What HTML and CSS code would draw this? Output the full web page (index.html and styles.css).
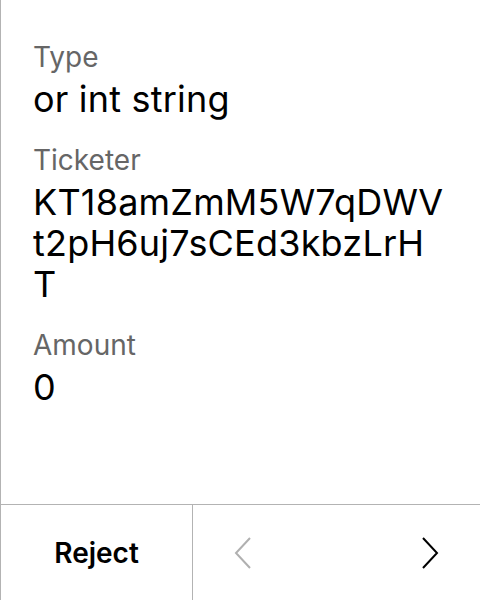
FILE: index.html
```html
<!DOCTYPE html>
<html>
<head>
<meta charset="utf-8">
<link rel="stylesheet" href="styles.css">
</head>
<body>
<div class="screen">
  <div class="content">
    <div class="field">
      <div class="label">Type</div>
      <div class="value">or int string</div>
    </div>
    <div class="field">
      <div class="label">Ticketer</div>
      <div class="value">KT18amZmM5W7qDWVt2pH6uj7sCEd3kbzLrHT</div>
    </div>
    <div class="field">
      <div class="label">Amount</div>
      <div class="value">0</div>
    </div>
  </div>
  <div class="footer">
    <div class="reject">Reject</div>
    <div class="nav">
      <svg class="chev prev" width="18" height="32" viewBox="0 0 18 32"><path d="M16 1 L2 16 L16 31" fill="none" stroke="currentColor" stroke-width="2"/></svg>
      <svg class="chev next" width="18" height="32" viewBox="0 0 18 32"><path d="M2 1 L16 16 L2 31" fill="none" stroke="currentColor" stroke-width="2"/></svg>
    </div>
  </div>
</div>
</body>
</html>
```
FILE: styles.css
```css
html, body {
  margin: 0;
  padding: 0;
  background: #fff;
}
.screen {
  width: 480px;
  height: 600px;
  box-sizing: border-box;
  border-left: 1px solid #b3b3b3;
  display: flex;
  flex-direction: column;
  font-family: Inter, "Noto Sans", sans-serif;
}
.content {
  flex: 1;
  padding: 39px 35px 0 32px;
  display: flex;
  flex-direction: column;
  gap: 22px;
}
.label {
  font-size: 28px;
  line-height: 36px;
  color: #666;
}
.value {
  font-size: 36px;
  letter-spacing: 0.2px;
  line-height: 41px;
  color: #000;
  word-break: break-all;
  margin-top: 4px;
}
.footer {
  height: 96px;
  border-top: 1px solid #b3b3b3;
  display: flex;
  box-sizing: border-box;
}
.reject {
  width: 191px;
  border-right: 1px solid #b3b3b3;
  display: flex;
  align-items: center;
  justify-content: center;
  font-weight: 600;
  font-size: 28px;
  color: #000;
}
.nav {
  flex: 1;
  display: flex;
  align-items: center;
  justify-content: space-between;
  padding: 0 41px 0 41px;
}
.chev.prev { color: #b0b0b0; }
.chev.next { color: #000; }
```
